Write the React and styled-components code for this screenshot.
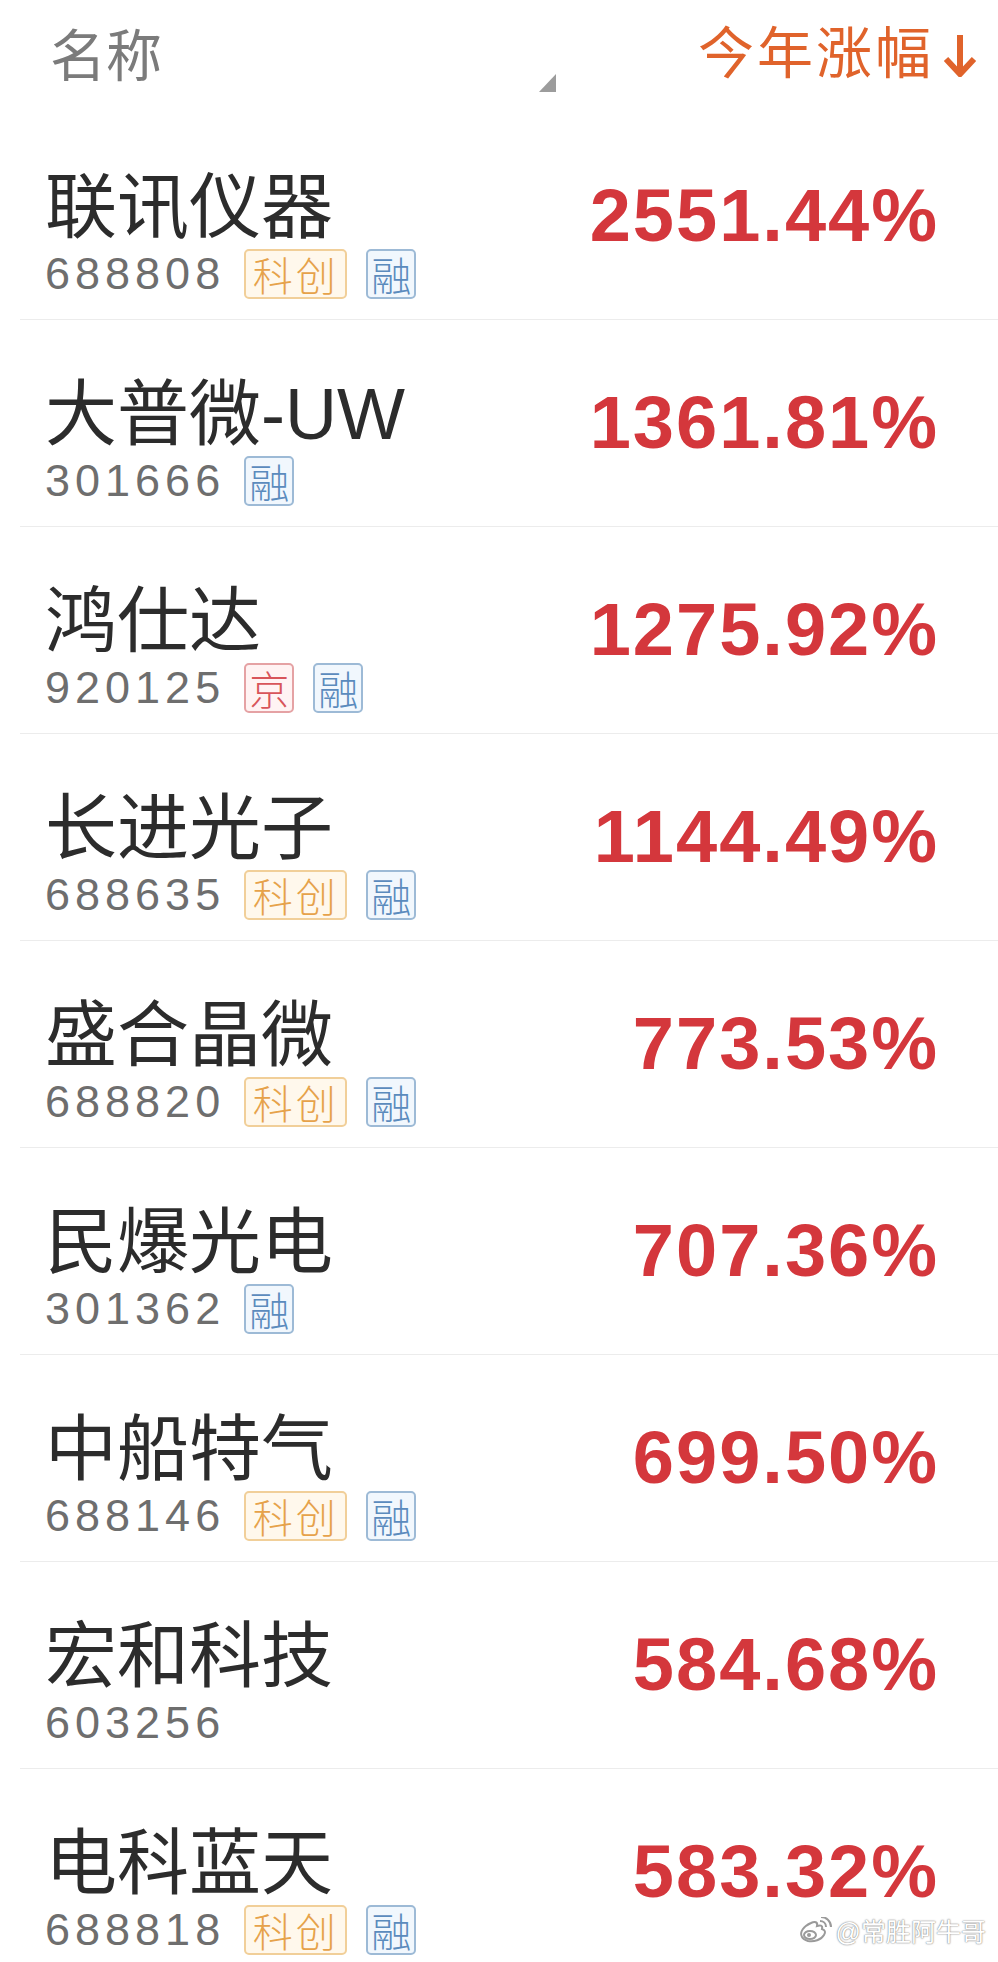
import React from 'react'
import styled, { createGlobalStyle } from 'styled-components'

const rows = [
  { name: '联讯仪器', code: '688808', tags: ['ke', 'rong'], pct: '2551.44%' },
  { name: '大普微-UW', code: '301666', tags: ['rong'], pct: '1361.81%' },
  { name: '鸿仕达', code: '920125', tags: ['jing', 'rong'], pct: '1275.92%' },
  { name: '长进光子', code: '688635', tags: ['ke', 'rong'], pct: '1144.49%' },
  { name: '盛合晶微', code: '688820', tags: ['ke', 'rong'], pct: '773.53%' },
  { name: '民爆光电', code: '301362', tags: ['rong'], pct: '707.36%' },
  { name: '中船特气', code: '688146', tags: ['ke', 'rong'], pct: '699.50%' },
  { name: '宏和科技', code: '603256', tags: [], pct: '584.68%' },
  { name: '电科蓝天', code: '688818', tags: ['ke', 'rong'], pct: '583.32%' },
]

// 标签样式
const tagStyles = {
  ke: { text: '科创', color: '#e6a24a', border: '#f1cf99', bg: '#fff8ec', width: 103 },
  rong: { text: '融', color: '#5b8bbd', border: '#9dbad6', bg: '#f1f7fd', width: 50 },
  jing: { text: '京', color: '#d8555a', border: '#e5a2a4', bg: '#fff3f3', width: 50 },
}

const GlobalStyle = createGlobalStyle`
  body {
    margin: 0;
    background: #fff;
    font-family: "Liberation Sans", "Noto Sans CJK SC", sans-serif;
  }
`

function WeiboLogo() {
  return (
    <svg width="34" height="26" viewBox="0 0 34 26">
      <g fill="none" stroke="#9a9a9a" strokeWidth="2">
        <path d="M4 20c-3-5 2-11 9-14 4-2 7-1 6 3 3-1 6-1 5 3 3 1 4 3 2 6-3 5-10 7-16 6-3-1-5-2-6-4z" fill="#fff" />
        <ellipse cx="12" cy="18" rx="6" ry="4" />
        <path d="M22 4c3 0 6 2 6 6" />
        <path d="M23 0c5 0 10 4 10 10" />
      </g>
      <circle cx="11" cy="18" r="2" fill="#9a9a9a" />
    </svg>
  )
}

function App() {
  return (
    <>
      <GlobalStyle />
      <Page>
        <Header>
          <HeadName>名称</HeadName>
          <Corner />
          <SortLabel>
            今年涨幅
            <svg width="36" height="44" viewBox="0 0 36 44">
              <path d="M18 2v38M4 26l14 15 14-15" fill="none" stroke="#e0632b" strokeWidth="6" />
            </svg>
          </SortLabel>
        </Header>
        {rows.map((r) => (
          <Row key={r.code}>
            <Info>
              <Name>{r.name}</Name>
              <CodeLine>
                <Code>{r.code}</Code>
                {r.tags.map((t) => {
                  const s = tagStyles[t]
                  return (
                    <Tag key={t} $color={s.color} $border={s.border} $bg={s.bg} $width={s.width}>
                      {s.text}
                    </Tag>
                  )
                })}
              </CodeLine>
            </Info>
            <Pct>{r.pct}</Pct>
          </Row>
        ))}
        <Watermark>
          <WeiboLogo />
          <span>@常胜阿牛哥</span>
        </Watermark>
      </Page>
    </>
  )
}

export default App

const Page = styled.div`
position: relative;
width: 998px;
height: 1962px;
overflow: hidden;
background: #fff;
`

const Header = styled.div`
height: 113px;
display: flex;
align-items: center;
padding: 0 20px 0 50px;
box-sizing: border-box;
`

const HeadName = styled.div`
flex: 1;
font-size: 56px;
line-height: 60px;
color: #7b7b7b;
`

const Corner = styled.div`
align-self: flex-end;
margin: 0 142px 21px 0;
width: 0;
height: 0;
border-left: 17px solid transparent;
border-bottom: 18px solid #9c9c9c;
`

const SortLabel = styled.div`
display: flex;
align-items: center;
gap: 8px;
font-size: 56px;
letter-spacing: 3px;
line-height: 60px;
color: #e0632b;
margin-top: -6px;
svg {
  margin-top: 2px;
}
`

const Row = styled.div`
margin-left: 20px;
height: 206px;
border-bottom: 1px solid #ececec;
display: flex;
align-items: center;
justify-content: space-between;
padding: 0 61px 0 25px;
`

const Info = styled.div`
align-self: flex-start;
padding-top: 52px;
display: flex;
flex-direction: column;
`

const Name = styled.div`
font-size: 72px;
line-height: 84px;
color: #2c2c2c;
white-space: nowrap;
`

const CodeLine = styled.div`
height: 50px;
display: flex;
align-items: center;
gap: 19px;
`

const Code = styled.span`
font-size: 45px;
letter-spacing: 5px;
color: #6e6e6e;
`

const Tag = styled.span`
box-sizing: border-box;
width: ${(p) => p.$width}px;
height: 50px;
display: flex;
align-items: center;
justify-content: center;
font-size: 40px;
letter-spacing: ${(p) => (p.$width > 60 ? '3px' : '0')};
color: ${(p) => p.$color};
background: ${(p) => p.$bg};
border: 2px solid ${(p) => p.$border};
border-radius: 5px;
font-family: "Noto Sans CJK SC", sans-serif;
font-weight: 300;
`

const Pct = styled.div`
font-size: 74px;
font-weight: 700;
letter-spacing: 2px;
margin-right: -2px;
color: #d4373c;
line-height: 1;
white-space: nowrap;
`

const Watermark = styled.div`
position: absolute;
right: 12px;
bottom: 14px;
display: flex;
align-items: center;
gap: 4px;
font-size: 25px;
color: #fff;
text-shadow: 0 0 1px #777, 0 0 2px #999;
`
